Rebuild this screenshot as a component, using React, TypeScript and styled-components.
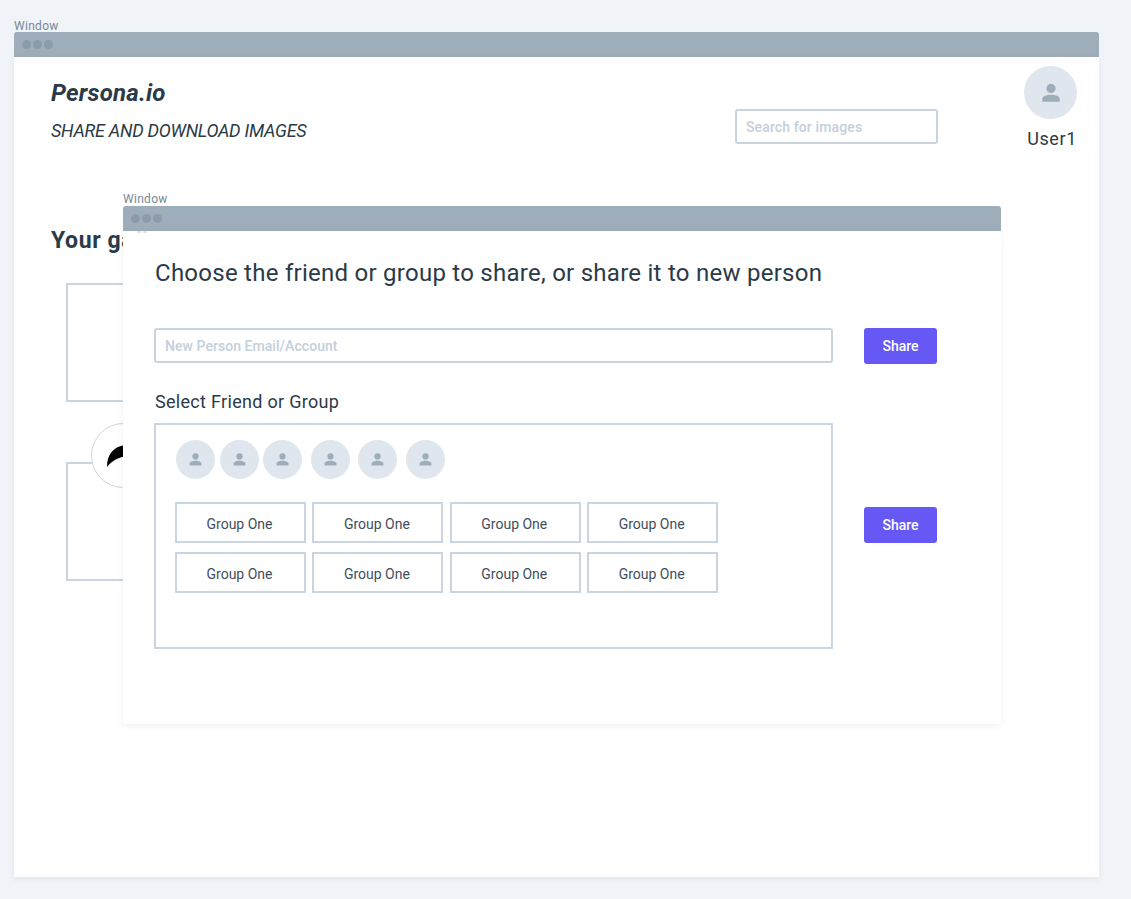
import React from 'react';
import styled, { createGlobalStyle } from 'styled-components';

const GlobalStyle = createGlobalStyle`
  html, body {
    margin: 0;
    padding: 0;
    background: #f0f4f8;
  }
  body {
    font-family: Roboto, "Liberation Sans", sans-serif;
    color: #2b3a48;
  }
`;

const Desktop = styled.div`
  position: relative;
  width: 1131px;
  height: 899px;
  overflow: hidden;
  padding: 18px 32px 22px 14px;
  box-sizing: border-box;
`;

const WindowFrame = styled.section`
  display: flex;
  flex-direction: column;
  height: 100%;
`;

const FloatingWindow = styled(WindowFrame)`
  position: absolute;
  left: 123px;
  top: 192px;
  width: 878px;
  height: 532px;
`;

const WindowLabel = styled.div`
  height: 14px;
  font-size: 12px;
  line-height: 16px;
  letter-spacing: 0.3px;
  color: #788896;
`;

const FloatingLabel = styled(WindowLabel)`
  line-height: 14px;
`;

const TitleBar = styled.div`
  flex: none;
  height: 25px;
  display: flex;
  align-items: center;
  gap: 2px;
  padding-left: 8px;
  box-sizing: border-box;
  background: #9eadba;
  border-radius: 3px 3px 0 0;
`;

const Dot = styled.span`
  width: 9px;
  height: 9px;
  border-radius: 50%;
  background: #8c9baa;
`;

const WindowBody = styled.div`
  position: relative;
  flex: 1;
  background: #fff;
  box-shadow: 0 2px 6px rgba(60, 80, 100, 0.08);
`;

const Header = styled.header`
  display: flex;
  align-items: flex-start;
  padding: 9px 22px 0 37px;
`;

const Brand = styled.div`
  flex: none;
  width: 684px;
  padding-top: 13px;
`;

const Logo = styled.h1`
  margin: 0;
  font-size: 24px;
  line-height: 28px;
  font-weight: 700;
  font-style: italic;
  letter-spacing: 0.2px;
`;

const Tagline = styled.p`
  margin: 13px 0 0;
  font-size: 18px;
  line-height: 22px;
  font-style: italic;
  font-weight: 400;
  letter-spacing: -0.27px;
`;

const TextField = styled.div<{ $width: number }>`
  flex: none;
  width: ${(p) => p.$width}px;
  height: 35px;
  display: flex;
  align-items: center;
  padding-left: 9px;
  box-sizing: border-box;
  border: 2px solid #c9d4de;
  border-radius: 3px;
  background: #fff;
  font-size: 14px;
  font-weight: 500;
  letter-spacing: 0.05px;
  color: #c3d0dc;
`;

const SearchField = styled(TextField)`
  margin-top: 43px;
  letter-spacing: 0.12px;
`;

const UserBlock = styled.div`
  margin-left: auto;
  display: flex;
  flex-direction: column;
  align-items: center;
  gap: 9px;
`;

const UserName = styled.span`
  padding-left: 3px;
  font-size: 18px;
  line-height: 22px;
  letter-spacing: 0.6px;
`;

const Avatar = styled.div<{ $size: number; $gap?: number }>`
  flex: none;
  width: ${(p) => p.$size}px;
  height: ${(p) => p.$size}px;
  margin-left: ${(p) => p.$gap ?? 0}px;
  display: flex;
  align-items: center;
  justify-content: center;
  border-radius: 50%;
  background: #dfe6ee;
`;

const Gallery = styled.div`
  padding: 77px 0 0 37px;
`;

const GalleryTitle = styled.h2`
  margin: 0;
  font-size: 23px;
  line-height: 28px;
  font-weight: 700;
  letter-spacing: 0.6px;
`;

const GalleryCards = styled.div`
  display: flex;
  flex-direction: column;
  gap: 60px;
  margin: 28px 0 0 15px;
`;

const GalleryCard = styled.div`
  position: relative;
  width: 300px;
  height: 119px;
  box-sizing: border-box;
  border: 2px solid #c9d6e2;
`;

const Badge = styled.div`
  position: absolute;
  left: 23px;
  top: -41px;
  width: 65px;
  height: 65px;
  box-sizing: border-box;
  border: 1px solid #c9d6e2;
  border-radius: 50%;
  background: #fff;
`;

const ModalBody = styled(WindowBody)`
  padding: 26px 32px 0;
`;

const PeekMark = styled.span`
  position: absolute;
  left: 14px;
  top: 0;
  width: 10px;
  height: 2px;
  background: linear-gradient(90deg, #dfe4ea 40%, transparent 40%, transparent 60%, #dfe4ea 60%);
`;

const ModalTitle = styled.h3`
  margin: 0;
  font-size: 24px;
  line-height: 32px;
  font-weight: 400;
  letter-spacing: 0.26px;
`;

const ShareGrid = styled.div`
  display: grid;
  grid-template-columns: 679px 73px;
  column-gap: 31px;
  margin: 39px 0 0 -1px;
`;

const ShareButton = styled.button<{ $top?: number }>`
  align-self: start;
  width: 73px;
  height: 36px;
  margin-top: ${(p) => p.$top ?? 0}px;
  border: 0;
  border-radius: 3px;
  background: #6558f5;
  color: #fff;
  font: 500 14px Roboto, sans-serif;
`;

const SectionLabel = styled.div`
  grid-column: 1 / -1;
  margin: 27px 0 0 1px;
  font-size: 18px;
  line-height: 22px;
  letter-spacing: 0.3px;
`;

const PickerBox = styled.div`
  height: 226px;
  margin-top: 10px;
  padding: 15px 19px 0;
  box-sizing: border-box;
  border: 2px solid #c9d6e2;
`;

const AvatarRow = styled.div`
  display: flex;
`;

const GroupGrid = styled.div`
  display: grid;
  grid-template-columns: repeat(4, 131px);
  grid-auto-rows: 41px;
  column-gap: 6.4px;
  row-gap: 9px;
  margin-top: 23px;
`;

const GroupChip = styled.div`
  display: flex;
  align-items: center;
  justify-content: center;
  padding: 2px 2px 0 0;
  box-sizing: border-box;
  border: 2px solid #c9d6e2;
  font-size: 14px;
  font-weight: 400;
  color: #3f4e5c;
`;

const PersonIcon = ({ size }: { size: number }) => (
  <svg width={size} height={size} viewBox="0 0 24 24" fill="#9eadba" aria-hidden="true">
    <circle cx="12" cy="7" r="5" />
    <path d="M2.5 21.5v-2.8c0-3 4.6-4.7 9.5-4.7s9.5 1.7 9.5 4.7v2.8z" />
  </svg>
);

const friendGaps = [1, 5, 4, 9, 8, 9];
const groups = Array.from({ length: 8 }, (_, i) => i);

const App: React.FC = () => (
  <Desktop>
    <GlobalStyle />
    <WindowFrame>
      <WindowLabel>Window</WindowLabel>
      <TitleBar>
        <Dot />
        <Dot />
        <Dot />
      </TitleBar>
      <WindowBody>
        <Header>
          <Brand>
            <Logo>Persona.io</Logo>
            <Tagline>SHARE AND DOWNLOAD IMAGES</Tagline>
          </Brand>
          <SearchField $width={203}>Search for images</SearchField>
          <UserBlock>
            <Avatar $size={53}>
              <PersonIcon size={22} />
            </Avatar>
            <UserName>User1</UserName>
          </UserBlock>
        </Header>
        <Gallery>
          <GalleryTitle>Your gallery</GalleryTitle>
          <GalleryCards>
            <GalleryCard />
            <GalleryCard>
              <Badge>
                <svg width="63" height="63" viewBox="0 0 63 63" aria-hidden="true">
                  <path d="M15 43C15 30 22 22 34 21L40 32C30 32 21 35 15 43z" fill="#000" />
                </svg>
              </Badge>
            </GalleryCard>
          </GalleryCards>
        </Gallery>
      </WindowBody>
    </WindowFrame>

    <FloatingWindow>
      <FloatingLabel>Window</FloatingLabel>
      <TitleBar>
        <Dot />
        <Dot />
        <Dot />
      </TitleBar>
      <ModalBody>
        <PeekMark />
        <ModalTitle>Choose the friend or group to share, or share it to new person</ModalTitle>
        <ShareGrid>
          <TextField $width={679}>New Person Email/Account</TextField>
          <ShareButton>Share</ShareButton>
          <SectionLabel>Select Friend or Group</SectionLabel>
          <PickerBox>
            <AvatarRow>
              {friendGaps.map((gap, i) => (
                <Avatar key={i} $size={39} $gap={gap}>
                  <PersonIcon size={15} />
                </Avatar>
              ))}
            </AvatarRow>
            <GroupGrid>
              {groups.map((g) => (
                <GroupChip key={g}>Group One</GroupChip>
              ))}
            </GroupGrid>
          </PickerBox>
          <ShareButton $top={94}>Share</ShareButton>
        </ShareGrid>
      </ModalBody>
    </FloatingWindow>
  </Desktop>
);

export default App;
